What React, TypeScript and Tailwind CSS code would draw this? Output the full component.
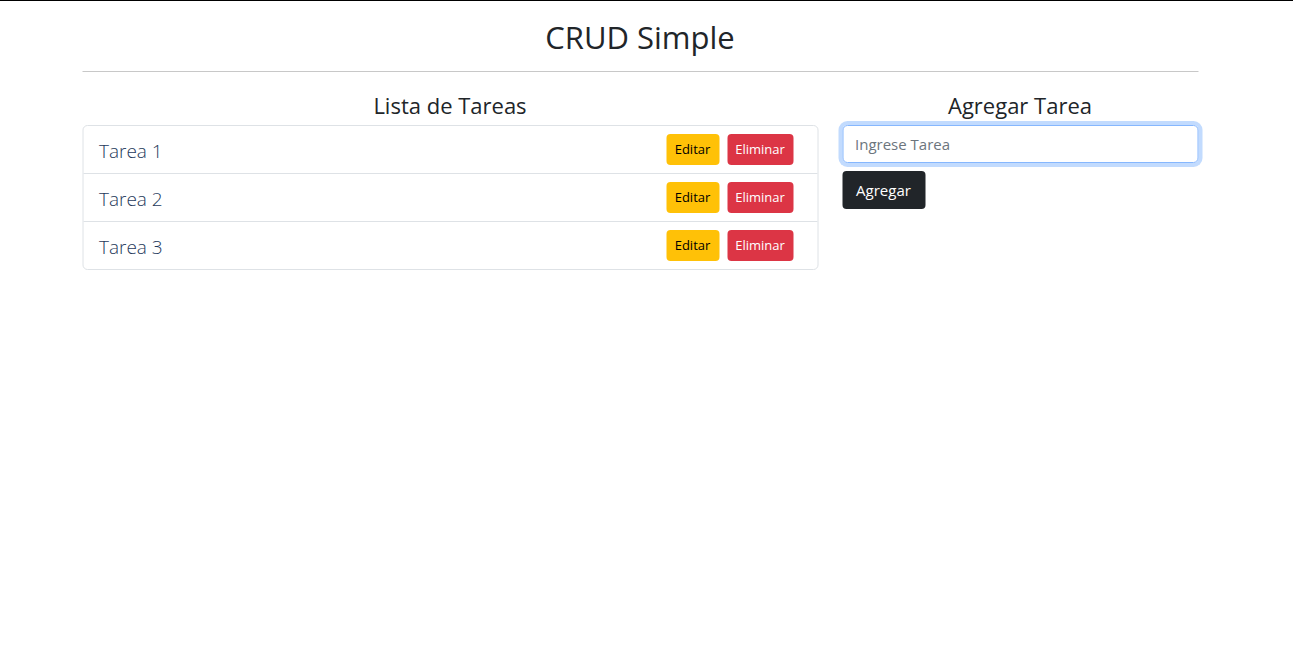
import React from "react";

const tasks = ["Tarea 1", "Tarea 2", "Tarea 3"];

export default function App() {
  return (
    <div
      className="min-h-[647px] bg-white border-t border-black text-[#212529]"
      style={{ fontFamily: '"Open Sans", "Noto Sans", sans-serif' }}
    >
      <div className="mx-auto w-[1116px] -translate-x-[6.5px]">
        <h1 className="text-center text-[31px] leading-[38px] font-normal mt-[17px] mb-[7px]">CRUD Simple</h1>
        <hr className="border-0 border-t border-[#c8c8c8] my-[15px]" />
        <div className="flex gap-[24px]">
          <div className="w-[736px]">
            <h4 className="text-center text-[22px] leading-[29px] font-normal mt-[4px] mb-[5px]">Lista de Tareas</h4>
            <ul className="border border-[#dee2e6] rounded-[5px]">
              {tasks.map((t, i) => (
                <li
                  key={t}
                  className={`h-[47px] flex items-center justify-between pl-[16px] pr-[24px] ${i > 0 ? "border-t border-[#dee2e6] h-[48px]" : ""}`}
                >
                  <span className="pt-[3px] text-[19px] font-light text-[#1f3a5c]">{t}</span>
                  <div className="flex gap-[8px]">
                    <button className="h-[31px] w-[53px] pt-[1px] rounded-[4px] bg-[#ffc107] text-black text-[13px]">Editar</button>
                    <button className="h-[31px] w-[66px] pt-[1px] rounded-[4px] bg-[#dc3545] text-white text-[13px]">Eliminar</button>
                  </div>
                </li>
              ))}
            </ul>
          </div>
          <div className="w-[356px]">
            <h4 className="text-center text-[22px] leading-[29px] font-normal mt-[4px] mb-[5px]">Agregar Tarea</h4>
            <input
              placeholder="Ingrese Tarea"
              className="w-full h-[38px] px-[12px] rounded-[5px] border border-[#86b7fe] outline-none shadow-[0_0_0_4px_rgba(13,110,253,0.25)] text-[15px] placeholder:text-[#6c757d]"
            />
            <button className="mt-[8px] h-[38px] w-[83px] pt-[1px] rounded-[4px] bg-[#212529] text-white text-[15px]">Agregar</button>
          </div>
        </div>
      </div>
    </div>
  );
}
